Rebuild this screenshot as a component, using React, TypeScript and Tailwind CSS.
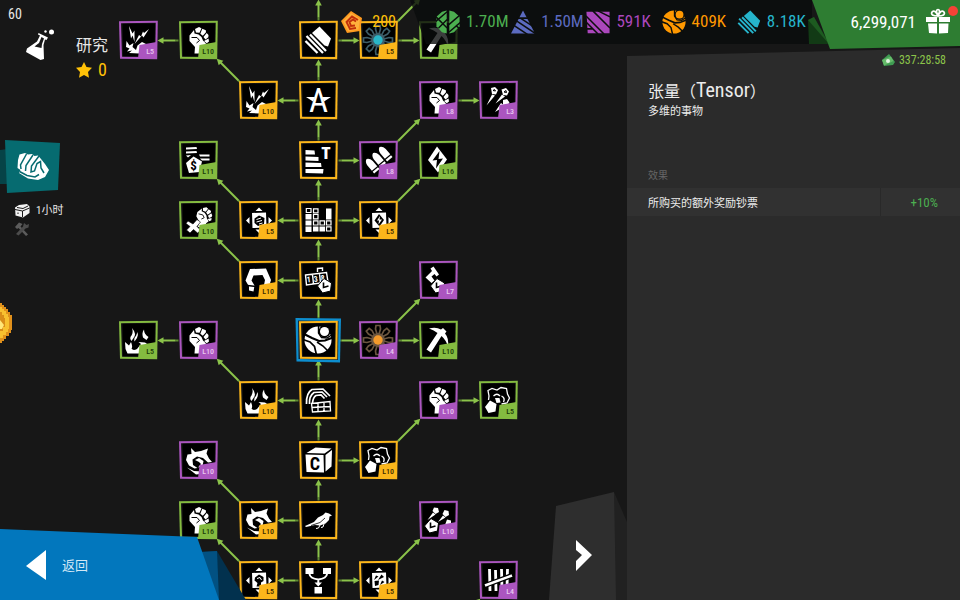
import { ReactNode, useState } from "react";

type Tone = "gold" | "green" | "purple";

interface TechNode {
  x: number;
  y: number;
  tone: Tone;
  icon: string;
  level?: string;
}

const TONES: Record<Tone, string> = {
  gold: "#fbb61b",
  green: "#84bb40",
  purple: "#ab55bf",
};

const LEVEL_TEXT: Record<Tone, string> = {
  gold: "text-[#3d2a00]",
  green: "text-[#1c3a08]",
  purple: "text-[#e9c8f0]",
};

const NODES: TechNode[] = [
  { x: 138, y: 40, tone: "purple", icon: "storm", level: "L5" },
  { x: 198, y: 40, tone: "green", icon: "fist", level: "L10" },
  { x: 318, y: 40, tone: "gold", icon: "vector" },
  { x: 378, y: 40, tone: "gold", icon: "coreCyan", level: "L5" },
  { x: 438, y: 40, tone: "green", icon: "pickaxe", level: "L10" },
  { x: 258, y: 100, tone: "gold", icon: "storm", level: "L10" },
  { x: 318, y: 100, tone: "gold", icon: "star" },
  { x: 438, y: 100, tone: "purple", icon: "fist", level: "L8" },
  { x: 498, y: 100, tone: "purple", icon: "meteors", level: "L3" },
  { x: 198, y: 160, tone: "green", icon: "bounty", level: "L11" },
  { x: 318, y: 160, tone: "gold", icon: "bars" },
  { x: 378, y: 160, tone: "purple", icon: "bullets", level: "L8" },
  { x: 438, y: 160, tone: "green", icon: "zap", level: "L16" },
  { x: 198, y: 220, tone: "green", icon: "crossFist", level: "L10" },
  { x: 258, y: 220, tone: "gold", icon: "frameCoin", level: "L5" },
  { x: 318, y: 220, tone: "gold", icon: "blocks" },
  { x: 378, y: 220, tone: "gold", icon: "frameZap", level: "L5" },
  { x: 258, y: 280, tone: "gold", icon: "magnet", level: "L10" },
  { x: 318, y: 280, tone: "gold", icon: "counter" },
  { x: 438, y: 280, tone: "purple", icon: "hammer", level: "L7" },
  { x: 138, y: 340, tone: "green", icon: "fire", level: "L5" },
  { x: 198, y: 340, tone: "purple", icon: "fist", level: "L10" },
  { x: 318, y: 340, tone: "gold", icon: "tensor" },
  { x: 378, y: 340, tone: "purple", icon: "coreOrange", level: "L4" },
  { x: 438, y: 340, tone: "green", icon: "pickaxe", level: "L10" },
  { x: 258, y: 400, tone: "gold", icon: "fire", level: "L10" },
  { x: 318, y: 400, tone: "gold", icon: "stadium" },
  { x: 438, y: 400, tone: "purple", icon: "fist", level: "L10" },
  { x: 498, y: 400, tone: "green", icon: "rock", level: "L5" },
  { x: 198, y: 460, tone: "purple", icon: "swirl", level: "L10" },
  { x: 318, y: 460, tone: "gold", icon: "cube" },
  { x: 378, y: 460, tone: "gold", icon: "rock", level: "L10" },
  { x: 198, y: 520, tone: "green", icon: "fist", level: "L16" },
  { x: 258, y: 520, tone: "gold", icon: "swirl", level: "L10" },
  { x: 318, y: 520, tone: "gold", icon: "bird" },
  { x: 438, y: 520, tone: "purple", icon: "meteorClock", level: "L10" },
  { x: 258, y: 580, tone: "gold", icon: "frameFist", level: "L5" },
  { x: 318, y: 580, tone: "gold", icon: "flow" },
  { x: 378, y: 580, tone: "gold", icon: "frameMeteor", level: "L5" },
  { x: 498, y: 580, tone: "purple", icon: "tally", level: "L4" },
];

// [fromX, fromY, toX, toY], the arrow head sits at the "to" end
const EDGES: number[][] = [
  ...[40, 100, 160, 220, 280, 340, 400, 460, 520, 580, 640].map((y) => [318, y, 318, y - 60]),
  [318, 40, 378, 40], [378, 40, 438, 40], [378, 40, 438, -20], [198, 40, 138, 40],
  [258, 100, 198, 40], [318, 100, 258, 100], [438, 100, 498, 100],
  [378, 160, 438, 100], [318, 160, 378, 160],
  [258, 220, 198, 160], [378, 220, 438, 160], [318, 220, 258, 220], [318, 220, 378, 220],
  [258, 280, 198, 220], [318, 280, 258, 280],
  [378, 340, 438, 280], [318, 340, 378, 340], [378, 340, 438, 340], [198, 340, 138, 340],
  [258, 400, 198, 340], [318, 400, 258, 400], [438, 400, 498, 400],
  [378, 460, 438, 400], [318, 460, 378, 460],
  [258, 520, 198, 460], [318, 520, 258, 520],
  [258, 580, 198, 520], [378, 580, 438, 520], [318, 580, 258, 580], [318, 580, 378, 580],
  [438, 640, 498, 580],
];

const Clock = ({ x, y }: { x: number; y: number }) => (
  <g transform={`translate(${x} ${y})`}>
    <path d="M-1-7.5 6.5-3 5.5 5 -2.500 7 -7.500 0Z" stroke="#000" strokeWidth="1" />
    <path d="M-1.500-3.500V1.500L3.500 0" fill="none" stroke="#000" strokeWidth="1.600" />
  </g>
);

const Frame = ({ children }: { children: ReactNode }) => (
  <g>
    <path d="M14 13 28 12.500 28.500 27.500 14.500 28Z" />
    <path d="M21 7.500 24.500 11H17.500ZM21 33 17.500 29.500H24.500ZM8 20.500 11.500 17V24ZM34 20.500 30.500 17V24Z" />
    {children}
  </g>
);

const FIST = (
  <g>
    <path d="M16 10 16.500 13.500 20.500 14.500 23.500 17 25 20.500 28 23.500 25.500 26.500 25 33.500H16.500L17 27 11.500 21 11.500 15.500Z" />
    <path d="M17 9 21 7 23.500 8.300 21.500 12.800 18 12.500ZM24.300 8.800 27.800 10.300 28 12.300 24.800 15.800 22.300 13.700ZM28.700 13 30.500 15 30.300 17.300 27.500 19.500 25.500 17ZM30.500 18.500 31 21.500 28.800 23.200 26 21Z" />
    <path d="M13.500 17.500 19 17.500 21.500 20.500 18.500 23" fill="none" stroke="#000" strokeWidth="1" />
  </g>
);

const METEORS = (
  <g>
    <path d="M8.500 25.500 14 14.500 17 15.500ZM17.500 23.500 24 14.500 27 16.500ZM17 32 23 23 27 26Z" />
    <path d="M13 8 17 7 20 10 18 14.500 14 14ZM23.500 9.500 28 8 31 11.500 29 15.500 25 15ZM25 20 29 19 31.500 22.500 29 26 25 25Z" />
    <path d="M15 10.500 16.500 9.500 17.500 11ZM26 12 28 10.500 28.500 12.500Z" stroke="#000" />
  </g>
);

const Core = ({ petal, core }: { petal: string; core: string }) => (
  <g>
    {[0, 45, 90, 135, 180, 225, 270, 315].map((angle) => (
      <path
        key={angle}
        transform={`rotate(${angle} 20 20)`}
        d="M19 14 17.500 9 18 5.500H22L22.500 9 21 14"
        fill="none" stroke={petal} strokeWidth="1.700"
      />
    ))}
    <circle cx="20" cy="20" r="7" fill={petal} />
    <circle cx="20" cy="20" r="4.700" fill={core} />
  </g>
);

// The disc's cuts take the colour of whatever the disc lies on
const Tensor = ({ cut }: { cut: string }) => (
  <g>
    <circle cx="20" cy="20" r="13.500" />
    <g fill="none" stroke={cut}>
      <path d="M5 13.500 14 18 21 21 27 20.500 35 17.500" strokeWidth="2" />
      <path d="M5 19.500 12 22 16.500 26.500 18.500 35" strokeWidth="1.700" />
      <path d="M19 22 25 26 31 32" strokeWidth="1.600" />
      <path d="M20.500 5 20.500 13 23.500 17.500 29 18 35 14" strokeWidth="1.400" />
    </g>
    <circle cx="26.500" cy="11.500" r="6" fill={cut} />
    <circle cx="26.500" cy="11.500" r="4.500" />
  </g>
);

const VECTOR = (
  <g>
    <path d="M14 13 21.500 6.500 33 18.500 30 26.500 26.500 25.500Z" />
    <path d="M12 14.500 28 31M8.500 16 25 33M7.500 21 19.500 33" fill="none" stroke="currentColor" strokeWidth="2.300" />
  </g>
);

const ICONS: Record<string, ReactNode> = {
  fist: FIST,
  meteors: METEORS,
  tensor: <Tensor cut="#000" />,
  vector: VECTOR,
  coreCyan: <Core petal="#3d5d68" core="#29b6c8" />,
  coreOrange: <Core petal="#6b5640" core="#f39a2b" />,
  storm: (
    <g>
      <path d="M11 6 14.500 13.500 16.500 10.500 16.500 22 14.500 15.500 13 18.500ZM31 9 25.500 17.500 24 15.500 16.500 24 21 15 23 16.500 25 11.500 26 13Z" />
      <path d="M8.500 21 11.500 25.500 15.500 23 14.500 27 18 30 19.500 25.500 24 22 28 24 31 28 25 27 21 33.500 11 33 14 30.500 9 31.500 11.500 28.500 8 27Z" />
    </g>
  ),
  fire: (
    <g>
      <path d="M14 8Q19 14 15.500 18L13.500 21Q11 18 13.500 15.500 15.500 12 14 8ZM19.500 12Q20.500 15 19 18L16.500 21.500Q15.500 18 18 16ZM26 9.500Q26 14 30.500 17L28.500 20 25 17.500Q23.500 13 26 9.500Z" />
      <path d="M7 22 11 25.500 13 22Q15 27 13.500 28.500 15 31 19 29L23 24 20.500 22 27 22.500 32 26 28 29 24 33.500 9.500 33.500 7.500 29Z" />
    </g>
  ),
  swirl: (
    <g>
      <path d="M13 8 17 12 23 11 30 8.500 28.500 13.500 31 18.500 34 22 30 22.500 25 18 19 16.500 14.500 19.500 15 25 19.500 28 16.500 28.500 11 25.500 8 20 9.500 14.500 13.500 14Z" />
      <path d="M17 20 21 18 25.500 21 24.500 26 20 27.500 23 24 21 22Z" />
      <path d="M9 27.500 16 31 24 31.500 30 28 27 33.500 18 34.500Z" />
    </g>
  ),
  rock: (
    <g>
      <path
        d="M11 16 10 10.500 14 8.500 19 10 23 7.500 28.500 8.500 29.500 14 31.500 18 29 23 23.500 24M11 16 10.500 20"
        fill="none" stroke="currentColor" strokeWidth="1.300"
      />
      <path d="M12 20.500 18.500 24 17.500 31.500 10.500 33 7 27ZM17 18 21.500 18 22.500 22.500 18.500 23Z" />
      <path d="M15.500 16Q19 12.500 22 16M23.500 16Q27.500 18 25.500 22" fill="none" stroke="currentColor" strokeWidth="1.300" />
    </g>
  ),
  pickaxe: (
    <path d="M11 8.500Q18 6.500 23 9.500L25 8 28.500 11.500 27 13.500Q31 18 30 26.500 28 20 23.500 16L13 32.500 8.500 29.500 19.500 13Q16 10 11 8.500Z" />
  ),
  star: (
    <g>
      <path d="M8 17 17 17 15 21.500ZM33 17 24 17 26 21.500Z" />
      <text x="20.500" y="32" textAnchor="middle" fontSize="33" fontWeight="400">A</text>
    </g>
  ),
  bounty: (
    <g>
      <path d="M8 7.500 18.500 7 19 9 8 9.500ZM8 11.500 18.500 11 19 13 8 13.500ZM8 15.500 13 15 10 17.500ZM21 14.500 31.500 14.500V16.500L22 16.500ZM22 18.500 31.500 18.500V20.500H24Z" />
      <path d="M15.500 16.500 24 21.500 21.500 32 11 33 8 23Z" />
      <text x="15.500" y="30" textAnchor="middle" fontSize="13" fontWeight="700" fill="#000">$</text>
    </g>
  ),
  bars: (
    <g>
      <path d="M7.500 10 16.500 10.500 17 14.500 7.500 14.500ZM7.500 16.500 20.500 17V21L7.500 20.500ZM7.500 22.500 23 23 23.500 27 7.500 27ZM7.500 29 25.500 29 25 33.500 7.500 33Z" />
      <text x="28" y="18.500" textAnchor="middle" fontSize="17" fontWeight="900">T</text>
    </g>
  ),
  bullets: (
    <g>
      {[[14, 25.5], [20.5, 19.5], [27, 13.5]].map(([x, y]) => (
        <g key={x} transform={`translate(${x} ${y}) rotate(-40)`}>
          <path d="M-3.500-3Q-3-7.500 0-8.500 3-7.500 3.500-3V4H-3.500ZM-3.500 5.200H3.500V7.500H-3.500Z" />
        </g>
      ))}
    </g>
  ),
  zap: (
    <g>
      <path d="M19 6.500 29 19.500 20 32.500 10 20Z" />
      <path d="M21.500 11 14.500 20.500 19 20 18 28.500 25 18.500 20.500 19Z" fill="#000" />
    </g>
  ),
  crossFist: (
    <g>
      <g transform="translate(9 2) rotate(14 20 16) scale(.8)">{FIST}</g>
      <path d="M10 21 15 24 19 19.500 22.500 22 19 26.500 23 30.500 19.500 33 15.500 29.500 12 33 8.500 30 12 26.500 8 23.500Z" stroke="#000" strokeWidth=".6" />
    </g>
  ),
  frameCoin: (
    <Frame>
      <path d="M16.500 18.500 21 15.500 26.500 18 26 24 20 26 16.500 23Z" fill="#000" />
      <path d="M18.500 19.500 23 18M18.500 22 24 20.500M21 24 24.500 23" stroke="currentColor" />
    </Frame>
  ),
  frameZap: (
    <Frame>
      <path d="M21 14 26 20 21.500 26.500 16.500 20.500Z" fill="#000" />
      <path d="M22 16 19 20.500 21 20.500 20.500 24.500 24 19.500 21.500 19.500Z" />
    </Frame>
  ),
  frameFist: (
    <Frame>
      <path d="M17 17.500 21 14.500 25.500 17 25.500 21 23 22.500V26.500H18.500L19.500 23 16.500 20.500Z" fill="#000" />
      <path d="M19 18.500 22 17.500 23.500 20" fill="none" stroke="currentColor" />
    </Frame>
  ),
  frameMeteor: (
    <Frame>
      <path d="M16 20 18 15.500 20.500 16.500ZM20 20 23.500 14.500 26 17ZM16.500 21 21 20.500 20.500 25 17 26ZM22 25 24 20.500 26.500 22Z" fill="#000" />
    </Frame>
  ),
  blocks: (
    <g>
      <path d="M7.500 14 13.500 14V19.500H7.500ZM7.500 20.500H13.500V25.500H7.500ZM7.500 26.500H13.500V32H7.500ZM15 26.500H20.500V31.500H15ZM21.500 26.500H27V31.500H21.500ZM28 8.500H33.500V19.500H28Z" />
      <path d="M8.300 8.500H13V12.500H8.300ZM15.500 8.800H20V12.800H15.500ZM15.500 14.500H20V18.800H15.500ZM15.500 20.800H20V25H15.500ZM22 20.800H26.500V25H22ZM28.500 20.800H33V25H28.500ZM28.500 26.800H33V31H28.500Z" fill="none" stroke="currentColor" strokeWidth="1.200" />
    </g>
  ),
  magnet: (
    <g>
      <path d="M12 9 28 8.500 33 20 31.500 25 26 25 27 20 24.500 15 15.500 15.500 13.500 20.500 16.500 25.500 15.500 31.500 11 30.500 11 26.500 7.500 20.500Z" />
      <path d="M9.500 25.500 18 26.500" stroke="#000" strokeWidth="1.300" />
    </g>
  ),
  counter: (
    <g>
      <path d="M7.500 15 28.500 12.500 30 22 8.500 25ZM14.500 14.500 15.500 24M21.500 13.500 22.500 23M19.500 12V8.500L24.500 8V11" fill="none" stroke="currentColor" strokeWidth="1.400" />
      <text x="9" y="22.500" fontSize="8" fontWeight="700" transform="rotate(-6 9 22)">1</text>
      <text x="16" y="22" fontSize="8" fontWeight="700" transform="rotate(-6 16 22)">3</text>
      <text x="23" y="21" fontSize="8" fontWeight="700" transform="rotate(-6 23 21)">8</text>
      <Clock x={27} y={26} />
    </g>
  ),
  hammer: (
    <g>
      <path d="M12.500 8.500 15.500 6.500 21 14.500 18.500 16.500 16.500 14 13.500 16.500 16.500 20.500 13.500 23 7.500 17.500 14 11Z" />
      <Clock x={20} y={26} />
    </g>
  ),
  stadium: (
    <g fill="none" stroke="currentColor">
      <path d="M8.500 24Q8 13 14 9.500L25 9 32 16M11.500 24Q11 16 16 12.500L24 12 29 17M14.500 23Q15 17.500 18 15.500L23 15 26.500 18.500" strokeWidth="1.700" />
      <path d="M13.500 23.500 32 21.500 32.500 31 14.500 32ZM14 27.500 32.500 26.500M20 23V31.500M26 22.500V31" strokeWidth="1.300" />
    </g>
  ),
  cube: (
    <g>
      <path d="M7.500 14.500 25.500 15 26 32.500 8.500 32ZM8.500 13 17.500 7.500 33.500 8.500 26.500 13.500ZM27.500 15 34 10 33.500 26.500 27.500 31.500Z" />
      <text x="17" y="30" textAnchor="middle" fontSize="18" fontWeight="700" fill="#000">C</text>
    </g>
  ),
  bird: (
    <g>
      <path d="M7 26 16 22 20 17.500 25 15 27.500 12.500 31 13.500 34 15.500 31.500 16.500 31 20 27.500 23.500 22 25.500 17 25 8 27Z" />
      <path d="M22 25 20.500 28 18 28.500M26 24 25 27 23 27.500" fill="none" stroke="currentColor" />
      <path d="M13 25.500 22 22.500 27 18" fill="none" stroke="#000" strokeWidth=".8" />
    </g>
  ),
  flow: (
    <g>
      <path d="M7.500 8H15.500V14H7.500ZM25 8H33V14H25ZM16.500 27H24V33.500H16.500ZM16.500 22.500H24L20.300 26.500Z" />
      <path d="M11.500 14Q12 18.500 20.300 19.500 28.500 18.500 29 14M20.300 19V25" fill="none" stroke="currentColor" strokeWidth="2" />
    </g>
  ),
  tally: (
    <g stroke="currentColor" strokeWidth="2.800">
      <path d="M11.500 9 12 31M17.500 10 18 31M23.500 9 24 30M29.500 9 29 28" />
      <path d="M7 25.500 34 15.500" stroke="#000" strokeWidth="5" />
      <path d="M7 25.500 34 15.500" strokeWidth="2.500" />
    </g>
  ),
  meteorClock: (
    <g>
      <path d="M9.500 20 15 12.500 17.500 14.500ZM20 22 25 15.500 27.500 17.500ZM16 7.500 20 8 21 12 17.500 14 14.500 11ZM26.500 10 30.500 11 31 15 27.500 17 24.500 14ZM29 19.500 33 20.500 33 25 27 25Z" />
      <Clock x={14} y={26} />
    </g>
  ),
};

const Arrow = ({ edge }: { edge: number[] }) => {
  const [x1, y1, x2, y2] = edge;
  const diagonal = x1 !== x2 && y1 !== y2;
  const angle = (Math.atan2(y2 - y1, x2 - x1) * 180) / Math.PI;
  const start = diagonal ? 25 : 20;
  const end = diagonal ? 59 : 41;
  return (
    <g transform={`translate(${x1 + 0.5} ${y1 + 0.5}) rotate(${angle})`}>
      <path d={`M${start} 0H${start + 3}`} stroke="#5f8a33" strokeWidth="2" />
      <path d={`M${start + 3} 0H${end - 5}`} stroke="#8bc34a" strokeWidth="2" />
      <path d={`M${end - 6}-3.300 ${end} 0 ${end - 6} 3.300Z`} fill="#8bc34a" />
    </g>
  );
};

const NodeButton = ({ node, selected, onSelect }: { node: TechNode; selected: boolean; onSelect: () => void }) => (
  <button
    type="button"
    onClick={onSelect}
    aria-label={node.icon}
    className="absolute size-10"
    style={{ left: node.x - 20, top: node.y - 20 }}
  >
    <svg viewBox="0 0 40 40" className="size-10 overflow-visible text-white" fill="currentColor" aria-hidden="true">
      {selected && <path d="M-2.500-2 43-1.500 42 42.500-1.500 41.500Z" fill="#0d8ecf" />}
      {selected && <path d="M0 .5 40.500 1 40 40 .5 39Z" fill="#172a36" />}
      <path d="M1 1.300 39.800.8 39.200 39.200 2 38.800Z" fill={TONES[node.tone]} />
      <path d="M3 3.200 37.800 2.800 37.200 37 4 36.800Z" fill="#171717" />
      <path d="M4.500 3.700 37 3.500 36.500 36.500 5 36.300Z" fill="#000" />
      {ICONS[node.icon]}
      {node.level && <path d="M21.500 25 38.500 22 38.800 38.500 20 38.500Z" fill={TONES[node.tone]} />}
    </svg>
    {node.level && (
      <span className={`absolute right-1 bottom-1 text-[8px] leading-2 font-medium ${LEVEL_TEXT[node.tone]}`}>{node.level}</span>
    )}
  </button>
);

const RESOURCES = [
  {
    name: "scalar",
    value: "1.70M",
    color: "text-[#4caf50]",
    art: (
      <g>
        <path d="M13 8 18.500 6.500V33.500L13 32 6.500 25V14Z" />
        <path d="M21.500 6.500 27 8 33.500 14V25L27 32 21.500 33.500Z" />
        <path d="M5 20 19 8M9 27 19 17M5 13 19 27M35 20 21 32M34 12 21 23M29 24 35 29" fill="none" stroke="#0c0f0d" strokeWidth="1.700" />
      </g>
    ),
  },
  {
    name: "vector",
    value: "1.50M",
    color: "text-[#5c6bc0]",
    art: (
      <g>
        <path d="M20 6.500 34 33.500H6Z" />
        <path d="M14 15.500H27M12 18.500 36 34.500M17 15.500 33 26M8 23 26 35" fill="none" stroke="#0c0f0d" strokeWidth="1.800" />
      </g>
    ),
  },
  {
    name: "matrix",
    value: "591K",
    color: "text-[#ab47bc]",
    art: (
      <g>
        <path d="M6.500 8H33.500V33H8Z" />
        <path d="M6 13 27 34M14 7 34 27M6 20 20 34M20 7 34 14M6 28H14" stroke="#0c0f0d" strokeWidth="1.800" />
      </g>
    ),
  },
  { name: "tensor", value: "409K", color: "text-[#ff9800]", art: <Tensor cut="#0c0f0d" /> },
  { name: "infiar", value: "8.18K", color: "text-[#26b5cc]", art: VECTOR },
];

const TopBar = () => (
  <header className="absolute inset-x-0 top-0 flex items-start justify-end">
    <div className="flex h-11 items-center gap-2 pr-3.5 text-base text-[#ffc107]">
      <svg viewBox="0 0 24 24" className="size-6" aria-hidden="true">
        <path d="M11 1 22 8 20 21 7 23 1 11Z" fill="#ff9a1f" />
        <path d="M11 3 20 9 18.500 19.500 8 21 3 11.500Z" fill="#ffb13c" />
        <path d="M16 18 10 19 6.500 12 12 6.500 18 10M15 15.500 11 16 9.500 12 13 9.500 16 11.500" fill="none" stroke="#c22f0a" strokeWidth="1.900" />
      </svg>
      200
    </div>
    <div className="grid h-11 w-[402px] grid-cols-5 bg-[#0a0c0c]/80 pl-[26px] [clip-path:polygon(0_0,100%_0,100%_100%,16px_100%)]">
      {RESOURCES.map((item) => (
        <div key={item.name} className={`flex items-center gap-1.5 text-[17px] ${item.color}`}>
          <svg viewBox="6 6 28 28" className="size-6 shrink-0" fill="currentColor" aria-hidden="true">
            {item.art}
          </svg>
          {item.value}
        </div>
      ))}
    </div>
    <button type="button" className="relative flex h-[49px] w-[148px] items-start justify-end gap-2.5 pt-2 pr-2.5 text-[17px] text-white">
      <svg viewBox="0 0 148 49" preserveAspectRatio="none" className="absolute inset-0 size-full overflow-visible" aria-hidden="true">
        <path d="M-4 20 2 17 18 44H-3Z" fill="#123a15" />
        <path d="M-4 20 2 17 17 44Z" fill="#1d5a20" />
        <path d="M0 0H148V46L18 49Z" fill="#2e7d32" />
      </svg>
      <span className="relative leading-7">6,299,071</span>
      <svg viewBox="0 0 24 26" className="relative h-[26px] w-6" fill="#fff" aria-hidden="true">
        <path d="M0 9H11V14H0ZM13 9H24V14H13ZM2 15.500H11V25.500L3 25ZM13 15.500H22.500L22 25 13 25.500Z" />
        <path d="M12 8Q4 8 6 4 9 1 12 8 15 1 18 4 20 8 12 8M12 7Q9 2 12 1.500 15 2 12 7" fill="none" stroke="#fff" strokeWidth="1.700" />
      </svg>
      <span className="absolute top-1.5 right-0.5 size-2.5 rounded-full bg-[#f44336]" />
    </button>
  </header>
);

const SideHud = () => (
  <div className="absolute top-0 left-0 flex flex-col text-[#e8e8e8]">
    <span className="pt-1.5 pl-2 text-sm leading-4">60</span>
    <div className="mt-3 flex pl-6">
      <svg viewBox="0 0 32 34" className="-mt-2 h-[34px] w-8" fill="#fff" aria-hidden="true">
        <path d="M14.500 7 24 11.500 22.500 14 21 13.500 19.500 19 20 33 16.500 34 2 26 3 22.500 13 15.500 16 9.500 14 8.500Z" />
        <path d="M17.500 11 15 17 10.500 20.500 17.500 22 18 18 20 12.500Z" fill="#171717" />
        <circle cx="21.500" cy="5.500" r="1.200" />
        <circle cx="27.500" cy="6" r="2.500" />
      </svg>
      <div className="pl-5">
        <h1 className="text-base leading-6">研究</h1>
        <div className="flex h-6 items-center gap-1.5 text-lg text-[#ffc107]">
          <svg viewBox="0 0 16 16" className="size-4" fill="currentColor" aria-hidden="true">
            <path d="M8 0 10.500 5 16 5.800 12 10 13 15.800 8 13 3 15.800 4 10 0 5.800 5.500 5Z" />
          </svg>
          0
        </div>
      </div>
    </div>
    <button type="button" aria-label="研究" className="mt-[58px] h-[54px] w-[61px]">
      <svg viewBox="0 0 61 54" className="size-full" aria-hidden="true">
        <path d="M0 10 8 9V44H0Z" fill="#064347" />
        <path d="M5 0 60 3 58 50 7 53Z" fill="#066b70" />
        <g fill="#fff">
          <path d="M18 20 19.500 14.500 25 13 28 14.500 32 14 34.500 16 38 15.500 41 19 45 24 49 30 45 37 38 40 28 38.500 19 33 20.500 30 17.500 28Z" />
          <path d="M26.500 14 20.500 25 21 29M33 15 26 25.500 25.500 31M39 16 31.500 26 31 32 34.500 31 37 23.500 40.500 21.500 41 28 44 33M19.500 31.500 27 35.500 35 37 39 34.500" fill="none" stroke="#066b70" strokeWidth="1.500" />
        </g>
      </svg>
    </button>
    <div className="mt-[7px] flex h-5 items-center gap-1.5 pl-3.5 text-[11px]">
      <svg viewBox="0 0 16 14" className="h-3.5 w-4" fill="#f2f2f2" aria-hidden="true">
        <path d="M1 3.500 5 1 13 0 15.500 2.500V9L9 13.500 1.500 11.500Z" />
        <path d="M1 5.500 8.500 7 15.500 4M3 3.500 9 4.500 14 2M8.500 7V13M4 8.500V10" fill="none" stroke="#171717" />
      </svg>
      1小时
    </div>
    <svg viewBox="0 0 16 16" className="ml-3.5 size-4" aria-hidden="true">
      <path d="M1 6 5 1.500 8.500 3 6.500 5.500 14 13.500 12 15 4.500 7 3 8Z" fill="#5c5c5c" />
      <path d="M10 2 12.500 4 15 3 14.500 6.500 11.500 7.500 4.500 14.500 2 13 9 5.500Z" fill="#4c4c4c" />
    </svg>
  </div>
);

const TechTree = () => {
  const [selected, setSelected] = useState("tensor");

  return (
    <section className="relative min-w-0 flex-1 overflow-hidden">
      <svg className="absolute inset-0 size-full" aria-hidden="true">
        {EDGES.map((edge) => (
          <Arrow key={edge.join("-")} edge={edge} />
        ))}
      </svg>
      {NODES.map((node) => (
        <NodeButton
          key={`${node.x}-${node.y}`}
          node={node}
          selected={node.icon === selected}
          onSelect={() => setSelected(node.icon)}
        />
      ))}

      <SideHud />

      {/* Pièce flottante */}
      <svg viewBox="0 0 13 42" className="absolute top-[302px] left-0 h-[42px] w-[13px]" aria-hidden="true">
        <path d="M0 1H2V3H4V5H6V7H8V10H10V13H12V28H11V31H9V34H6V37H4V39H2V41H0Z" fill="#e0901b" />
        <path d="M0 5H2V7H4V9H6V12H8V15H9V27H8V30H6V33H3V36H0Z" fill="#f8c02f" />
        <path d="M0 10H2V13H4V16H5V25H3V29H0Z" fill="#d98d18" />
        <path d="M0 18 4 23 2 27H0Z" fill="#ffe67a" />
      </svg>

      <button type="button" className="absolute bottom-0 left-0 flex h-[72px] w-[248px] items-center gap-4 pl-[26px] text-[13px] text-[#d3e8f6]">
        <svg viewBox="0 0 248 72" className="absolute inset-0 size-full" aria-hidden="true">
          <path d="M200 24 217 23 246 72H210Z" fill="#02314e" />
          <path d="M200 24 217 23 219 72H205Z" fill="#025182" />
          <path d="M0 1 197 9 219 72H0Z" fill="#0277bd" />
        </svg>
        <svg viewBox="0 0 20 32" className="relative h-8 w-5" fill="#fff" aria-hidden="true">
          <path d="M0 18 20 2V32Z" />
        </svg>
        <span className="relative pt-1">返回</span>
      </button>

      <button type="button" aria-label="next" className="absolute right-0 bottom-0 h-[108px] w-[78px]">
        <svg viewBox="0 0 78 108" className="size-full" aria-hidden="true">
          <path d="M65 0 78 30V108H60Z" fill="#212121" />
          <path d="M7 14 65 0 67 108H0Z" fill="#2e2e2e" />
          <path d="M27 48 43 63 27 79V69L33 63 27 58Z" fill="#fff" />
        </svg>
      </button>
    </section>
  );
};

const DetailPanel = () => (
  <aside className="mt-12 w-[333px] shrink-0 bg-[#2b2b2b] text-[#ececec] [clip-path:polygon(0_8px,100%_0,100%_100%,0_100%)]">
    <div className="flex h-6 items-center justify-end gap-1 pr-3.5 text-xs text-[#8bc34a]">
      <svg viewBox="0 0 14 12" className="h-3 w-3.5" aria-hidden="true">
        <path d="M1 6 8 0 11 4 14 8 12 11 3 12Z" fill="#3f9b52" />
        <path d="M1 6 10 2.500 12.500 7 3 11.500Z" fill="#66bb6a" />
        <circle cx="7" cy="7" r="2" fill="#e1f3e0" />
      </svg>
      337:28:58
    </div>
    <h2 className="mt-1.5 pl-[21px] text-base leading-6">
      张量（<span className="text-xl leading-6">Tensor</span>）
    </h2>
    <p className="pl-[21px] text-[11px] leading-4">多维的事物</p>
    <table className="mt-12 w-full text-left text-[11px]">
      <thead>
        <tr>
          <th colSpan={2} className="h-5 pb-1 pl-[21px] text-[10px] leading-4 font-normal text-[#666]">效果</th>
        </tr>
      </thead>
      <tbody>
        <tr className="h-7 bg-[#313131]">
          <td className="pt-1 pl-[21px]">所购买的额外奖励钞票</td>
          <td className="w-20 border-l border-[#292929] pt-0.5 pl-2 text-center text-[13px] text-[#4caf50]">+10%</td>
        </tr>
      </tbody>
    </table>
  </aside>
);

export default function App() {
  return (
    <main className="relative flex h-screen overflow-hidden bg-[#171717] font-['Roboto_Condensed','Liberation_Sans_Narrow','Noto_Sans_CJK_SC',sans-serif]">
      <TechTree />
      <DetailPanel />
      <TopBar />
    </main>
  );
}
